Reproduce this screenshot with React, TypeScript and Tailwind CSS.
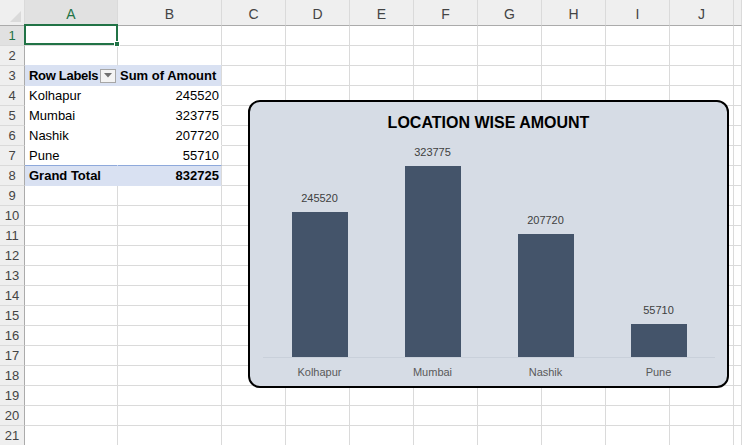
import React from "react";

const COLS = ["A", "B", "C", "D", "E", "F", "G", "H", "I", "J", ""];
const ROWS = Array.from({ length: 21 }, (_, i) => i + 1);

const data = [
  { name: "Kolhapur", amount: 245520 },
  { name: "Mumbai", amount: 323775 },
  { name: "Nashik", amount: 207720 },
  { name: "Pune", amount: 55710 },
];
const total = data.reduce((s, d) => s + d.amount, 0);
const maxBar = 191;
const maxAmount = Math.max(...data.map((d) => d.amount));

const cellFont = { fontFamily: '"Liberation Sans", Arial, sans-serif' };

function DropdownButton() {
  return (
    <div className="shrink-0 w-[16px] h-[14px] border border-[#a6a6a6] bg-[#f3f3f3] flex items-center justify-center">
      <svg width="8" height="5" viewBox="0 0 8 5">
        <path d="M0 0 L8 0 L4 4.5 Z" fill="#707070" />
      </svg>
    </div>
  );
}

function Cell({ row, col }: { row: number; col: number }) {
  const pivot = row >= 2 && row <= 8 && col <= 1;
  const shaded = row === 3 || row === 8;
  let bg = "bg-white";
  let br = "border-r-[#dadada]";
  let bb = "border-b-[#dadada]";
  if (pivot && row >= 3) {
    bg = shaded ? "bg-[#d9e1f2]" : "bg-white";
    if (col === 0) br = shaded ? "border-r-[#d9e1f2]" : "border-r-white";
    if (row === 7) bb = "border-b-[#8ea9db]";
    else if (shaded) bb = "border-b-[#d9e1f2]";
    else bb = "border-b-white";
  }
  if (row === 2 && col <= 1) bb = "border-b-[#d9e1f2]";

  let content: React.ReactNode = null;
  if (row === 3 && col === 0)
    content = (
      <div className="flex items-center justify-between h-full pl-[4px] pr-[1px] font-bold whitespace-nowrap">
        <span className="tracking-[-0.3px]">Row Labels</span>
        <DropdownButton />
      </div>
    );
  if (row === 3 && col === 1)
    content = <div className="pl-[2px] font-bold whitespace-nowrap">Sum of Amount</div>;
  if (row >= 4 && row <= 7) {
    const d = data[row - 4];
    if (col === 0) content = <div className="pl-[4px]">{d.name}</div>;
    if (col === 1) content = <div className="text-right pr-[2px]">{d.amount}</div>;
  }
  if (row === 8 && col === 0) content = <div className="pl-[4px] font-bold">Grand Total</div>;
  if (row === 8 && col === 1)
    content = <div className="text-right pr-[2px] font-bold">{total}</div>;

  return (
    <div
      className={`relative h-[20px] border-r border-b ${bg} ${br} ${bb} text-[13px] leading-[20px] text-black`}
      style={cellFont}
    >
      {content}
      {row === 1 && col === 0 && (
        <div className="absolute left-[-1px] right-[-1px] top-[-2px] bottom-0 border-2 border-[#217346] z-10">
          <div className="absolute right-[-4px] bottom-[-4px] w-[6px] h-[6px] bg-[#217346] border border-white" />
        </div>
      )}
    </div>
  );
}

function Chart() {
  return (
    <div
      className="absolute left-[248px] top-[100px] w-[481px] h-[288px] rounded-[12px] border-2 border-black bg-[#d6dce5] flex flex-col z-20"
      style={cellFont}
    >
      <div className="pt-[11px] text-center text-[16px] leading-[20px] font-bold text-black">
        LOCATION WISE AMOUNT
      </div>
      <div className="flex-1 flex ml-[13px] mr-[12px]">
        {data.map((d) => (
          <div key={d.name} className="flex-1 flex flex-col justify-end items-center">
            <div className="text-[11px] leading-[14px] mb-[7px] text-[#404040]">{d.amount}</div>
            <div
              className="w-[56px] bg-[#44546a]"
              style={{ height: Math.round((d.amount / maxAmount) * maxBar) }}
            />
          </div>
        ))}
      </div>
      <div className="flex ml-[13px] mr-[12px] border-t border-[#c9d0da] h-[29px]">
        {data.map((d) => (
          <div key={d.name} className="flex-1 text-center pt-[7px] text-[11px] leading-[14px] text-[#595959]">
            {d.name}
          </div>
        ))}
      </div>
    </div>
  );
}

export default function App() {
  return (
    <div className="relative w-[742px] h-[445px] overflow-hidden bg-white">
      <div className="grid grid-cols-[25px_93px_104px_repeat(8,64px)_1fr]">
        <div className="h-[26px] bg-[#efefef] border-r border-b border-r-[#dadada] border-b-[#ababab] relative">
          <svg className="absolute right-[3px] bottom-[3px]" width="11" height="11" viewBox="0 0 11 11">
            <path d="M11 0 L11 11 L0 11 Z" fill="#dadada" />
          </svg>
        </div>
        {COLS.map((c, i) => (
          <div
            key={"h" + i}
            className={`h-[26px] border-r border-b border-r-[#dadada] border-b-[#ababab] flex items-end justify-center pb-[2px] text-[14px] leading-[18px] ${
              i === 0 ? "bg-[#e1e1e1] text-[#217346]" : "bg-[#efefef] text-[#444444]"
            }`}
            style={cellFont}
          >
            {c}
          </div>
        ))}
        {ROWS.map((r) => (
          <React.Fragment key={r}>
            <div
              className={`h-[20px] border-r border-b border-r-[#ababab] border-b-[#dadada] flex items-center justify-center text-[13px] ${
                r === 1 ? "bg-[#e1e1e1] text-[#217346]" : "bg-[#efefef] text-[#444444]"
              }`}
              style={cellFont}
            >
              {r}
            </div>
            {COLS.map((_, c) => (
              <Cell key={c} row={r} col={c} />
            ))}
          </React.Fragment>
        ))}
      </div>
      <Chart />
    </div>
  );
}
